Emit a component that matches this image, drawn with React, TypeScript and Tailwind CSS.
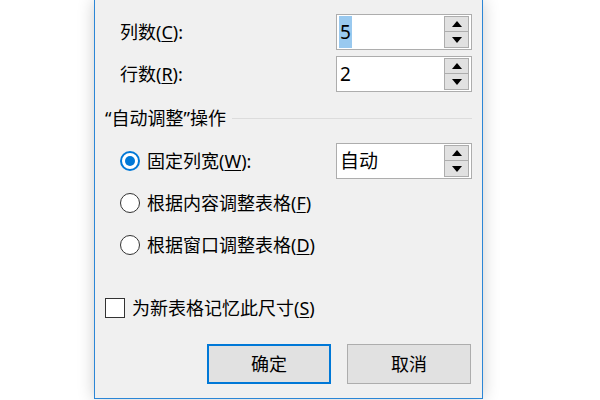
import type { ReactNode } from "react";

const FONT = "font-['Segoe_UI','Noto_Sans','Noto_Sans_CJK_SC',sans-serif]";

function Key({ k }: { k: string }) {
  return <span className="underline underline-offset-2 decoration-1">{k}</span>;
}

function Arrow({ up }: { up?: boolean }) {
  return (
    <svg width="10" height="6" viewBox="0 0 10 6">
      <path d={up ? "M0 6 L5 0 L10 6 Z" : "M0 0 L5 6 L10 0 Z"} fill="#000" />
    </svg>
  );
}

function SpinBox({ value, selected }: { value: string; selected?: boolean }) {
  return (
    <div className="flex h-[36px] w-[136px] items-center border border-[#adadad] bg-white pr-[2px]">
      <div className="flex-1 pl-[2px] text-[19px] leading-none text-black">
        <span className={selected ? "bg-[#99c9ef] px-[1px] py-[3px]" : "px-[1px]"}>{value}</span>
      </div>
      <div className="flex h-[32px] w-[25px] flex-col">
        <div className="flex h-[16px] items-center justify-center border border-[#adadad] bg-[#e1e1e1]">
          <Arrow up />
        </div>
        <div className="flex h-[16px] items-center justify-center border border-t-0 border-[#adadad] bg-[#e1e1e1]">
          <Arrow />
        </div>
      </div>
    </div>
  );
}

function Radio({ checked, children }: { checked?: boolean; children: ReactNode }) {
  return (
    <div className="flex items-center">
      <div
        className={
          checked
            ? "flex h-[20px] w-[20px] items-center justify-center rounded-full border-2 border-[#0078d7] bg-white"
            : "h-[20px] w-[20px] rounded-full border border-[#333333] bg-white"
        }
      >
        {checked && <div className="h-[10px] w-[10px] rounded-full bg-[#0078d7]" />}
      </div>
      <span className="ml-[7px]">{children}</span>
    </div>
  );
}

export default function App() {
  return (
    <div className={`h-[400px] w-[600px] overflow-hidden bg-white ${FONT} text-[18px] leading-none text-black`}>
      <div className="ml-[94px] h-[399px] w-[389px] border-x border-b border-[#2b86d6] bg-[#f0f0f0] pt-[14px] shadow-[0_0_16px_rgba(0,0,0,0.2)]">
        <div className="flex h-[36px] items-center justify-between pl-[25px] pr-[10px]">
          <span>列数(<Key k="C" />):</span>
          <SpinBox value="5" selected />
        </div>
        <div className="mt-[6px] flex h-[36px] items-center justify-between pl-[25px] pr-[10px]">
          <span>行数(<Key k="R" />):</span>
          <SpinBox value="2" />
        </div>

        <div className="mt-[16px] flex h-[20px] items-center pl-[10px] pr-[10px]">
          <span>“自动调整”操作</span>
          <div className="ml-[6px] h-px flex-1 bg-[#dcdcdc]" />
        </div>

        <div className="mt-[12px] flex flex-col pl-[25px] pr-[10px]">
          <div className="flex h-[42px] items-center justify-between">
            <Radio checked>
              固定列宽(<Key k="W" />):
            </Radio>
            <SpinBox value="自动" />
          </div>
          <div className="flex h-[42px] items-center">
            <Radio>
              根据内容调整表格(<Key k="F" />)
            </Radio>
          </div>
          <div className="flex h-[42px] items-center">
            <Radio>
              根据窗口调整表格(<Key k="D" />)
            </Radio>
          </div>
        </div>

        <div className="mt-[32px] flex h-[20px] items-center pl-[10px]">
          <div className="h-[20px] w-[20px] border border-[#333333] bg-white" />
          <span className="ml-[7px]">
            为新表格记忆此尺寸(<Key k="S" />)
          </span>
        </div>

        <div className="mt-[26px] flex justify-end gap-[16px] pr-[11px]">
          <button className="flex h-[40px] w-[124px] items-center justify-center border-2 border-[#0078d7] bg-[#e1e1e1]">
            确定
          </button>
          <button className="flex h-[40px] w-[124px] items-center justify-center border border-[#adadad] bg-[#e1e1e1]">
            取消
          </button>
        </div>
      </div>
    </div>
  );
}
